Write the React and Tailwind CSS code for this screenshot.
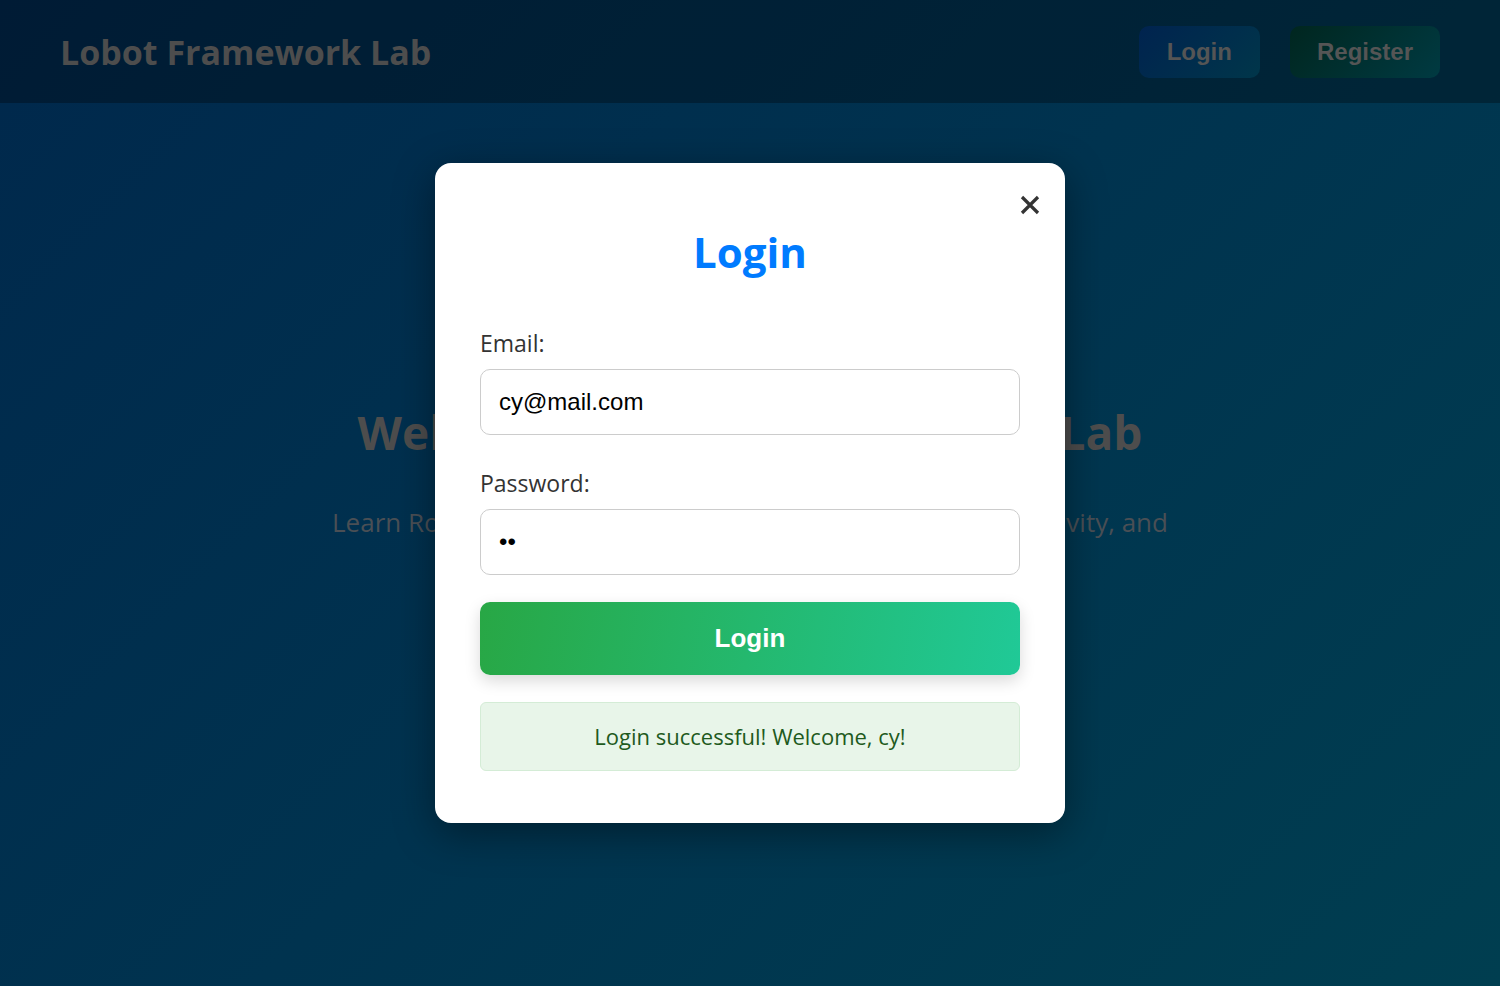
import React from "react";

const seg = { fontFamily: '"Open Sans", "Noto Sans", sans-serif' };
const arial = { fontFamily: '"Liberation Sans", Arial, sans-serif' };

export default function App() {
  return (
    <div className="relative h-[986px] w-full overflow-hidden bg-[linear-gradient(135deg,#00284c_0%,#00334f_50%,#003e50_100%)]" style={seg}>
      <header className="flex h-[103px] items-center justify-between bg-black/30 px-[60px]">
        <h1 className="text-[34px] font-bold leading-none text-[#4d4d4d]">Lobot Framework Lab</h1>
        <nav className="flex items-center gap-[30px]" style={arial}>
          <button className="h-[52px] rounded-[10px] bg-[linear-gradient(135deg,#00234f,#00364a)] px-[28px] text-[24px] font-bold text-[#555]">Login</button>
          <button className="h-[52px] rounded-[10px] bg-[linear-gradient(135deg,#00261f,#003a42)] px-[27px] text-[24px] font-bold text-[#555]">Register</button>
        </nav>
      </header>

      <section className="flex flex-col items-center pt-[298px] text-center">
        <h2 className="text-[46px] font-bold leading-[62px] text-[#4d4d4d]">Welcome to Lobot Framework Lab</h2>
        <p className="mt-[38px] max-w-[860px] text-[26px] leading-[42px] text-[#4a4f55]">
          Learn Robot Framework through hands-on practice, interactivity, and fun challenges.
        </p>
      </section>

      <div className="absolute inset-0 flex items-start justify-center pt-[163px]">
        <div className="relative w-[630px] rounded-[16px] bg-white px-[45px] pb-[52px] pt-[62px] shadow-[0_10px_40px_rgba(0,0,0,0.4)]">
          <button className="absolute right-[25px] top-[32px] flex h-[20px] w-[20px] items-center justify-center" aria-label="Close">
            <svg width="20" height="20" viewBox="0 0 20 20">
              <path d="M2 2 L18 18 M18 2 L2 18" stroke="#333" strokeWidth="3.2" strokeLinecap="butt" />
            </svg>
          </button>
          <h2 className="text-center text-[42px] font-bold leading-[53px] text-[#007bff]">Login</h2>

          <label className="mt-[49px] block text-[23px] leading-[32px] text-[#333]">Email:</label>
          <input
            readOnly
            defaultValue="cy@mail.com"
            className="mt-[10px] block h-[66px] w-full rounded-[10px] border border-[#ccc] bg-white px-[18px] text-[24px] text-black outline-none"
            style={arial}
          />

          <label className="mt-[32px] block text-[23px] leading-[32px] text-[#333]">Password:</label>
          <input
            readOnly
            type="password"
            defaultValue="cy"
            className="mt-[10px] block h-[66px] w-full rounded-[10px] border border-[#ccc] bg-white px-[18px] text-[24px] text-black outline-none"
            style={arial}
          />

          <button
            className="mt-[27px] block h-[73px] w-full rounded-[10px] bg-[linear-gradient(100deg,#28a745,#20c997)] text-[26px] font-bold text-white shadow-[0_6px_16px_rgba(0,0,0,0.15)]"
            style={arial}
          >
            Login
          </button>

          <div className="mt-[27px] flex h-[69px] items-center justify-center rounded-[6px] border border-[#d4ecd6] bg-[#e8f5e9] text-[22px] text-[#1e5a20]">
            Login successful! Welcome, cy!
          </div>
        </div>
      </div>
    </div>
  );
}
